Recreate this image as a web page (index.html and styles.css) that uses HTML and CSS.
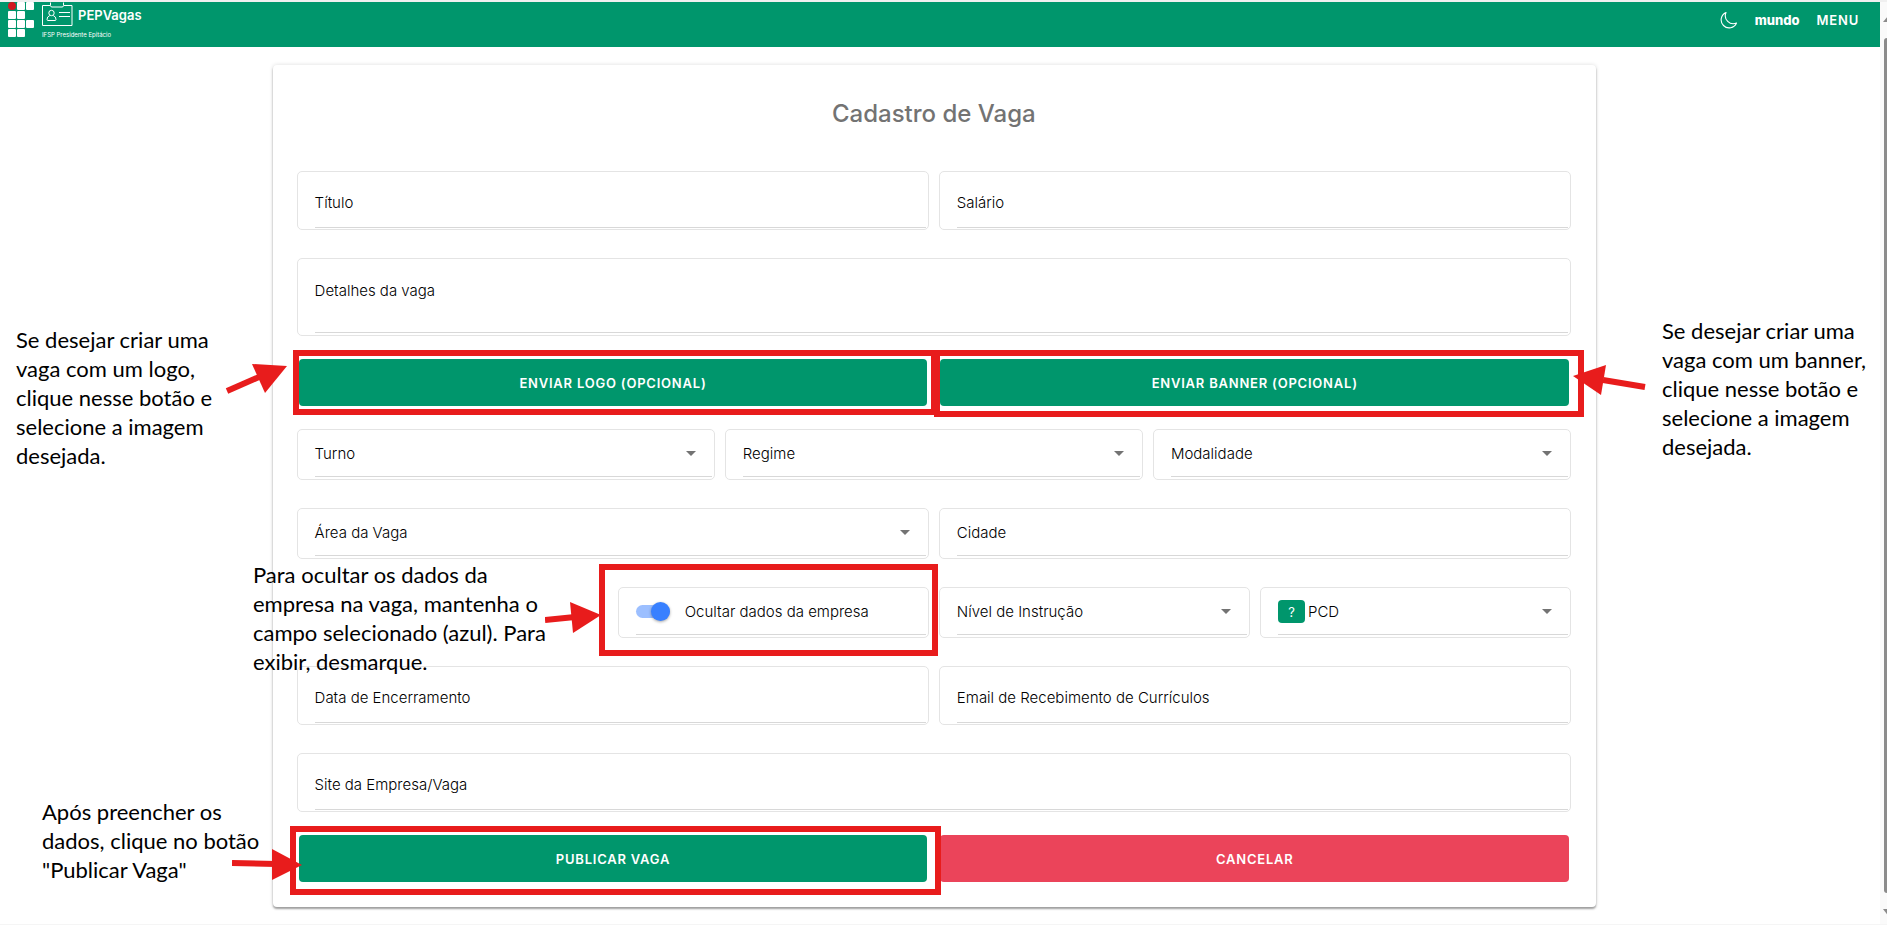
FILE: index.html
```html
<!DOCTYPE html>
<html lang="pt-BR">
<head>
<meta charset="utf-8">
<title>PEPVagas - Cadastro de Vaga</title>
<link rel="stylesheet" href="styles.css">
</head>
<body>
<div class="page">
  <div class="content">
    <header class="topbar">
      <a class="brand" href="#">
        <svg class="brand-ifsp" width="27" height="36" viewBox="0 0 27 36" aria-hidden="true">
          <circle cx="4" cy="4" r="4" fill="#d01820"/>
          <g fill="#fff">
            <rect x="9" width="8" height="8" rx="1"/><rect x="18" width="8" height="8" rx="1"/>
            <rect y="9" width="8" height="8" rx="1"/><rect x="9" y="9" width="8" height="8" rx="1"/>
            <rect y="18" width="8" height="8" rx="1"/><rect x="9" y="18" width="8" height="8" rx="1"/><rect x="18" y="18" width="8" height="8" rx="1"/>
            <rect y="27" width="8" height="8" rx="1"/><rect x="9" y="27" width="8" height="8" rx="1"/>
          </g>
        </svg>
        <span class="brand-text">
          <span class="brand-row">
            <svg width="31" height="24" viewBox="0 0 31 24" fill="none" stroke="#fff" aria-hidden="true">
              <path d="M8 3.5H.5v20h29.500v-20H22" stroke-linejoin="round"/>
              <path d="M8.500 .5v3q0 1.500 1.500 1.500h10q1.500 0 1.500-1.500v-3"/>
              <circle cx="9.500" cy="11" r="2.700"/>
              <path d="M7.800 13.500Q5 14.500 5 17.500q0 1 1 1h7q1 0 1-1 0-3-2.800-4M17 10.500h11M17 14.500h11"/>
            </svg>
            <span class="brand-name">PEPVagas</span>
          </span>
          <span class="brand-sub">IFSP Presidente Epitácio</span>
        </span>
      </a>
      <nav class="actions">
        <button class="icon-button" type="button" aria-label="Modo escuro">
          <svg width="18" height="18" viewBox="0 0 18 18" fill="none" stroke="#fff" stroke-width="1.100" stroke-linejoin="round" aria-hidden="true">
            <path d="M6 1.500A8 8 0 1 0 16.500 12 8 8 0 0 1 6 1.500Z"/>
          </svg>
        </button>
        <a class="user" href="#">mundo</a>
        <button class="menu" type="button">MENU</button>
      </nav>
    </header>

    <main class="main">
      <form class="card">
        <h1 class="title">Cadastro de Vaga</h1>
        <div class="row">
          <div class="field tall"><div class="line"><label for="titulo">Título</label><input id="titulo" type="text"></div></div>
          <div class="field tall"><div class="line"><label for="salario">Salário</label><input id="salario" type="text"></div></div>
        </div>
        <div class="row">
          <div class="field area"><div class="line"><label for="detalhes">Detalhes da vaga</label><textarea id="detalhes"></textarea></div></div>
        </div>
        <div class="row buttons">
          <button class="btn" type="button">ENVIAR LOGO (OPCIONAL)</button>
          <button class="btn" type="button">ENVIAR BANNER (OPCIONAL)</button>
        </div>
        <div class="row">
          <div class="field"><div class="line"><label for="turno">Turno</label><select id="turno"><option></option></select></div></div>
          <div class="field"><div class="line"><label for="regime">Regime</label><select id="regime"><option></option></select></div></div>
          <div class="field"><div class="line"><label for="modalidade">Modalidade</label><select id="modalidade"><option></option></select></div></div>
        </div>
        <div class="row">
          <div class="field"><div class="line"><label for="area">Área da Vaga</label><select id="area"><option></option></select></div></div>
          <div class="field"><div class="line"><label for="cidade">Cidade</label><input id="cidade" type="text"></div></div>
        </div>
        <div class="row quarters">
          <div class="field from-second"><div class="line"><input class="toggle" id="ocultar" type="checkbox" checked><label for="ocultar">Ocultar dados da empresa</label></div></div>
          <div class="field"><div class="line"><label for="nivel">Nível de Instrução</label><select id="nivel"><option></option></select></div></div>
          <div class="field"><div class="line"><button class="help" type="button">?</button><label for="pcd">PCD</label><select id="pcd"><option></option></select></div></div>
        </div>
        <div class="row">
          <div class="field tall"><div class="line"><label for="data">Data de Encerramento</label><input id="data" type="text"></div></div>
          <div class="field tall"><div class="line"><label for="email">Email de Recebimento de Currículos</label><input id="email" type="email"></div></div>
        </div>
        <div class="row">
          <div class="field tall"><div class="line"><label for="site">Site da Empresa/Vaga</label><input id="site" type="text"></div></div>
        </div>
        <div class="row buttons">
          <button class="btn" type="submit">PUBLICAR VAGA</button>
          <button class="btn danger" type="button">CANCELAR</button>
        </div>
      </form>
    </main>
  </div>
  <div class="scrollbar" aria-hidden="true">
    <svg width="7" height="9" viewBox="0 0 7 9"><path d="M3 8 9 1v7z" fill="#8b8b8b"/></svg>
    <div class="thumb"></div>
    <svg width="7" height="8" viewBox="0 0 7 8"><path d="M3 1h6v8z" fill="#8b8b8b"/></svg>
  </div>

  <div class="mark mark-logo"></div>
  <div class="mark mark-banner"></div>
  <div class="mark mark-toggle"></div>
  <div class="mark mark-publish"></div>

  <p class="note note-logo">Se desejar criar uma<br>vaga com um logo,<br>clique nesse botão e<br>selecione a imagem<br>desejada.</p>
  <p class="note note-banner">Se desejar criar uma<br>vaga com um banner,<br>clique nesse botão e<br>selecione a imagem<br>desejada.</p>
  <p class="note note-toggle">Para ocultar os dados da<br>empresa na vaga, mantenha o<br>campo selecionado (azul). Para<br>exibir, desmarque.</p>
  <p class="note note-publish">Após preencher os<br>dados, clique no botão<br>"Publicar Vaga"</p>

  <svg class="arrow arrow-logo" width="64" height="34" viewBox="0 0 64 34" aria-hidden="true"><path d="M2 28 34 14" stroke="#e81c1c" stroke-width="6"/><path d="M27 1 62 3 40 30z" fill="#e81c1c"/></svg>
  <svg class="arrow arrow-banner" width="74" height="34" viewBox="0 0 74 34" aria-hidden="true"><path d="M72 23 30 16" stroke="#e81c1c" stroke-width="6"/><path d="M0 12 33 1 28 31z" fill="#e81c1c"/></svg>
  <svg class="arrow arrow-toggle" width="58" height="34" viewBox="0 0 58 34" aria-hidden="true"><path d="M0 19 30 16" stroke="#e81c1c" stroke-width="6"/><path d="M25 1 56 14 28 32z" fill="#e81c1c"/></svg>
  <svg class="arrow arrow-publish" width="72" height="34" viewBox="0 0 72 34" aria-hidden="true"><path d="M0 15 44 16" stroke="#e81c1c" stroke-width="6"/><path d="M40 1 70 17 40 32z" fill="#e81c1c"/></svg>
</div>
</body>
</html>
```
FILE: styles.css
```css
* { box-sizing: border-box; }

body {
  margin: 0;
  font-family: Inter, "Liberation Sans", sans-serif;
  color: #000;
  background: #fff;
}

.page {
  position: relative;
  display: flex;
  min-height: 100vh;
  border-top: 2px solid #f0f0f0;
  border-bottom: 1px solid #f5f5f5;
  overflow: hidden;
}

.content { flex: 1; }

/* Top bar */
.topbar {
  display: flex;
  justify-content: space-between;
  height: 45px;
  padding: 0 21px 0 8px;
  background: #00966c;
  color: #fff;
}

.brand {
  display: flex;
  gap: 7px;
  color: #fff;
  text-decoration: none;
}

.brand-text { display: flex; flex-direction: column; gap: 5px; }
.brand-row { display: flex; gap: 5px; height: 24px; }
.brand-name { font-size: 13px; font-weight: 600; line-height: 26px; }
.brand-sub { font-size: 6px; line-height: 8px; }

.actions {
  display: flex;
  align-items: center;
  gap: 17px;
  height: 35px;
}

.actions button {
  border: 0;
  padding: 0;
  background: none;
  color: #fff;
  font-family: inherit;
}

.actions .icon-button { display: flex; }

.user {
  color: #fff;
  font-size: 13px;
  font-weight: 800;
  text-decoration: none;
}

.actions .menu { font-size: 13px; font-weight: 600; letter-spacing: 0.06em; }

/* Form card */
.main { padding: 18px 15.1% 17px 14.5%; }

.card {
  display: flex;
  flex-direction: column;
  gap: 28px;
  padding: 33px 25px 30px 24px;
  border-radius: 4px;
  box-shadow: 0 2px 2px rgba(0, 0, 0, 0.34), 0 0 4px rgba(0, 0, 0, 0.14);
}

.title {
  margin: 0 0 13px;
  color: #737373;
  font-size: 24px;
  font-weight: 500;
  line-height: 32px;
  text-align: center;
}

.row { display: flex; gap: 10px; }
.row > * { flex: 1 1 0; min-width: 0; }

.quarters { display: grid; grid-template-columns: repeat(4, 1fr); }
.from-second { grid-column-start: 2; }

.buttons { gap: 13px; margin: -5px 2px; }

.btn {
  height: 47px;
  border: 0;
  border-radius: 4px;
  background: #00966c;
  color: #fff;
  font-family: inherit;
  font-size: 13px;
  font-weight: 600;
  letter-spacing: 0.06em;
}

.danger { background: #eb445a; }

.field {
  padding: 0 2px 2px 17px;
  border: 1px solid #e4e4e4;
  border-radius: 5px;
}

.line {
  display: flex;
  align-items: center;
  height: 47px;
  padding-top: 1px;
  border-bottom: 1px solid #d8d8d8;
  font-size: 15px;
  font-weight: 300;
}

.tall { padding-bottom: 1px; }
.tall .line { height: 56px; padding-top: 6px; }
.area .line { align-items: flex-start; height: 74px; padding-top: 22px; }

.line input:not(.toggle),
.line textarea,
.line select {
  flex: 1;
  min-width: 0;
  height: 100%;
  padding: 0 8px;
  border: 0;
  outline: 0;
  background: transparent;
  resize: none;
  appearance: none;
  font: inherit;
}

.line:has(select)::after {
  content: "";
  margin-right: 16px;
  border: 5px solid transparent;
  border-top-color: #737373;
  border-bottom: 0;
}

.toggle {
  position: relative;
  appearance: none;
  width: 34px;
  height: 13px;
  margin: 0 15px 0 0;
  border-radius: 7px;
  background: #9cbfff;
}

.toggle::before {
  content: "";
  position: absolute;
  top: -3px;
  right: 0;
  width: 19px;
  height: 19px;
  border-radius: 50%;
  background: #3880ff;
  box-shadow: 0 1px 3px rgba(0, 0, 0, 0.35);
}

.help {
  width: 27px;
  height: 23px;
  margin-right: 3px;
  padding: 0;
  border: 0;
  border-radius: 4px;
  background: #00966c;
  color: #fff;
  font-family: inherit;
  font-size: 13px;
}

/* Window scrollbar */
.scrollbar {
  display: flex;
  flex-direction: column;
  gap: 15px;
  width: 7px;
  padding: 12px 0 8px;
  background: #fafafa;
}

.thumb { flex: 1; margin-left: 4px; border-radius: 4px 0 0 4px; background: #8b8b8b; }

/* Tutorial annotations, drawn over the form */
.mark { position: absolute; border: 6px solid #e81c1c; pointer-events: none; }
.mark-logo { left: 293px; top: 348px; width: 644px; height: 65px; }
.mark-banner { left: 934px; top: 348px; width: 650px; height: 67px; }
.mark-toggle { left: 599px; top: 562px; width: 339px; height: 92px; }
.mark-publish { left: 290px; top: 824px; width: 651px; height: 69px; }

.note {
  position: absolute;
  margin: 0;
  font-family: Lato, "Open Sans", sans-serif;
  font-size: 22px;
  line-height: 29px;
  white-space: nowrap;
  pointer-events: none;
}

.note-logo { left: 16px; top: 323px; }
.note-banner { left: 1662px; top: 314px; }
.note-toggle { left: 253px; top: 558px; }
.note-publish { left: 42px; top: 795px; }

.arrow { position: absolute; pointer-events: none; }
.arrow-logo { left: 225px; top: 361px; }
.arrow-banner { left: 1573px; top: 362px; }
.arrow-toggle { left: 545px; top: 599px; }
.arrow-publish { left: 232px; top: 846px; }
```
